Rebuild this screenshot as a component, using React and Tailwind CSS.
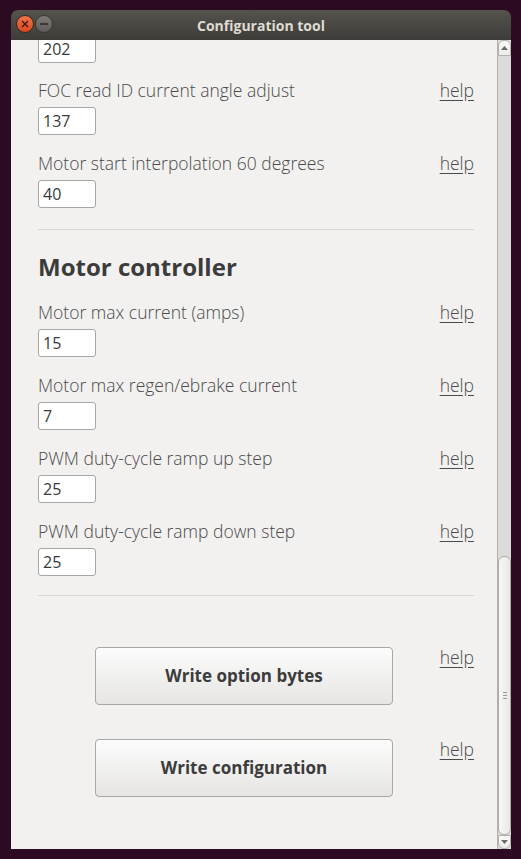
import React from 'react';

const FONT = { fontFamily: '"Open Sans", "Noto Sans", sans-serif' };

function Field({ label, value, className = '' }) {
    return (
        <div className={className}>
            <div className="flex items-center justify-between h-[24px]">
                <span className="text-[17.5px] font-light text-[#4a4a4a] whitespace-nowrap">{label}</span>
                <a className="text-[17.5px] font-light text-[#4a4a4a] underline underline-offset-[3px]">help</a>
            </div>
            <Input value={value} className="mt-[5px]" />
        </div>
    );
}

function Input({ value, className = '' }) {
    return (
        <div className={`w-[58px] h-[28px] bg-white border border-[#a9a7a4] rounded-[3px] pl-[4px] flex items-center text-[16px] text-[#3a3a3a] ${className}`}>
            {value}
        </div>
    );
}

function ActionRow({ label, className = '' }) {
    return (
        <div className={`flex items-start justify-between ${className}`}>
            <button className="ml-[57px] w-[298px] h-[58px] rounded-[4px] border border-[#a9a8a5] bg-gradient-to-b from-[#fcfcfc] to-[#e6e5e3] text-[17px] font-bold text-[#3c3c3c] flex items-center justify-center">
                {label}
            </button>
            <a className="mt-[-2px] h-[24px] leading-[24px] text-[17.5px] font-light text-[#4a4a4a] underline underline-offset-[3px]">help</a>
        </div>
    );
}

export default function App() {
    return (
        <div className="w-[521px] h-[859px] bg-[#2c0a21] pt-[10px] pl-[11px] pr-[10px] pb-[10px]" style={FONT}>
            <div className="flex flex-col h-full">
                {/* Title bar */}
                <div className="relative h-[30px] rounded-t-[7px] bg-gradient-to-b from-[#55534e] to-[#3d3c38] flex items-center justify-center">
                    <div className="absolute left-[5px] top-[5px] flex gap-[1px]">
                        <div className="w-[18px] h-[18px] rounded-full bg-gradient-to-b from-[#f2744a] to-[#d9461a] border border-[#3a2a22] flex items-center justify-center">
                            <svg width="8" height="8" viewBox="0 0 8 8"><path d="M1 1L7 7M7 1L1 7" stroke="#3b1a0e" strokeWidth="1.4" /></svg>
                        </div>
                        <div className="w-[18px] h-[18px] rounded-full bg-gradient-to-b from-[#7d7b76] to-[#5f5d59] border border-[#3a3935] flex items-center justify-center">
                            <div className="w-[8px] h-[1.5px] bg-[#3a3935]" />
                        </div>
                    </div>
                    <span className="text-[14px] font-bold text-[#dfdbd2]">Configuration tool</span>
                </div>

                {/* Body */}
                <div className="flex flex-1 min-h-0 bg-[#f2f1f0]">
                    <div className="flex-1 overflow-hidden pl-[27px] pr-[23px]">
                        <Input value="202" className="mt-[-5px]" />
                        <Field label="FOC read ID current angle adjust" value="137" className="mt-[15px]" />
                        <Field label="Motor start interpolation 60 degrees" value="40" className="mt-[16px]" />
                        <div className="mt-[21px] h-px bg-[#d9d7d4]" />
                        <div className="mt-[22px] h-[30px] flex items-center text-[24px] font-bold text-[#3c3c3c]">Motor controller</div>
                        <Field label="Motor max current (amps)" value="15" className="mt-[18px]" />
                        <Field label="Motor max regen/ebrake current" value="7" className="mt-[16px]" />
                        <Field label="PWM duty-cycle ramp up step" value="25" className="mt-[16px]" />
                        <Field label="PWM duty-cycle ramp down step" value="25" className="mt-[16px]" />
                        <div className="mt-[19px] h-px bg-[#d9d7d4]" />
                        <ActionRow label="Write option bytes" className="mt-[51px]" />
                        <ActionRow label="Write configuration" className="mt-[34px]" />
                    </div>

                    {/* Scrollbar */}
                    <div className="w-[14px] flex flex-col bg-[#dcdbd9] border-l border-[#b3b1ae]">
                        <div className="h-[16px] rounded-t-[6px] bg-gradient-to-b from-[#fbfbfa] to-[#ecebe9] border border-[#b3b1ae] flex items-center justify-center">
                            <svg width="7" height="4" viewBox="0 0 7 4"><path d="M0 4L3.5 0L7 4Z" fill="#6a6a6a" /></svg>
                        </div>
                        <div className="flex-1 flex flex-col justify-end">
                            <div className="h-[279px] rounded-t-[6px] rounded-b-[6px] bg-gradient-to-r from-[#f7f7f6] to-[#e9e8e6] border border-[#aeaca9] flex items-center justify-center">
                                <div className="flex flex-col gap-[2px]">
                                    <div className="w-[4px] h-px bg-[#9a9896]" />
                                    <div className="w-[4px] h-px bg-[#9a9896]" />
                                    <div className="w-[4px] h-px bg-[#9a9896]" />
                                </div>
                            </div>
                        </div>
                        <div className="h-[14px] rounded-b-[6px] bg-gradient-to-b from-[#fbfbfa] to-[#ecebe9] border border-[#b3b1ae] flex items-center justify-center">
                            <svg width="7" height="4" viewBox="0 0 7 4"><path d="M0 0L3.5 4L7 0Z" fill="#6a6a6a" /></svg>
                        </div>
                    </div>
                </div>
            </div>
        </div>
    );
}
